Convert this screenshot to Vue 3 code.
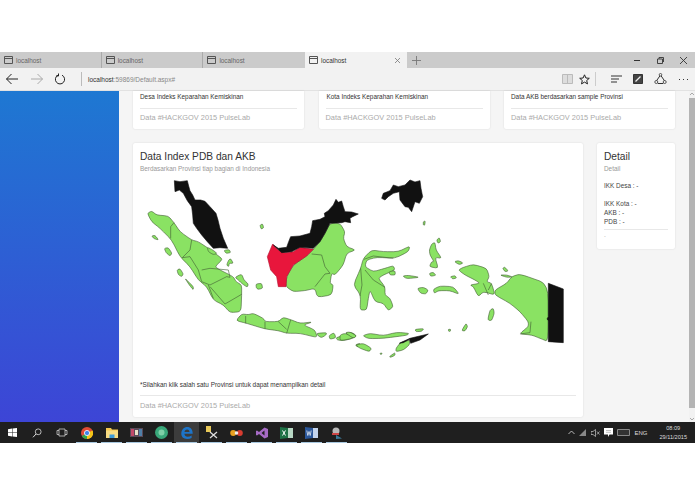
<template>
  <div class="screen">
    <div class="top-gap"></div>

    <div class="tabbar">
      <div v-for="(tab, i) in tabs" :key="i" class="tab" :class="{ active: i === 3, sep: i === 0 || i === 1 }">
        <svg class="tab-icon" width="9" height="8" viewBox="0 0 9 8"><path d="M.5.5h8v7h-8zM.5 2.5h8" fill="none" stroke="#555" /></svg>
        <span>{{ tab }}</span>
        <svg v-if="i === 3" class="tab-close" width="7" height="7" viewBox="0 0 7 7"><path d="M1 1l5 5M6 1L1 6" stroke="#777" stroke-width=".8" /></svg>
      </div>
      <svg class="plus" width="9" height="9" viewBox="0 0 9 9"><path d="M4.5 0v9M0 4.5h9" stroke="#777" stroke-width=".9" /></svg>
      <div class="win-btns">
        <svg width="9" height="9" viewBox="0 0 9 9"><path d="M1 4.5h6" stroke="#333" /></svg>
        <svg width="9" height="9" viewBox="0 0 9 9"><path d="M1.5 3h5v4.5h-5zM3 3V1.5h4.500V6" fill="none" stroke="#333" stroke-width=".9" /></svg>
        <svg width="9" height="9" viewBox="0 0 9 9"><path d="M1 1l7 7M8 1L1 8" stroke="#333" stroke-width=".9" /></svg>
      </div>
    </div>

    <div class="toolbar">
      <svg class="nav" width="14" height="12" viewBox="0 0 14 12"><path d="M13 6H1.5M6.5 1l-5 5 5 5" fill="none" stroke="#222" /></svg>
      <svg class="nav fwd" width="14" height="12" viewBox="0 0 14 12"><path d="M1 6h11.5M7.5 1l5 5-5 5" fill="none" stroke="#aaa" /></svg>
      <svg class="nav reload" width="12" height="12" viewBox="0 0 12 12"><path d="M4 2.200a4.600 4.600 0 1 0 4 0M4.500 .5v2.500H2" fill="none" stroke="#222" /></svg>
      <div class="url-sep"></div>
      <div class="url"><b>localhost</b>:59869/Default.aspx#</div>
      <div class="tools">
        <svg width="11" height="10" viewBox="0 0 11 10"><path d="M.5 .5h10v9H.5zM5.500 .5v9" fill="#ddd" stroke="#bbb" /></svg>
        <svg width="11" height="11" viewBox="0 0 11 11"><path d="M5.500 .8l1.400 3.200 3.400.3-2.600 2.200.8 3.400-3-1.800-3 1.800.8-3.400L.7 4.300l3.400-.3z" fill="none" stroke="#222" /></svg>
        <div class="tool-sep"></div>
        <svg class="t-hub" width="11" height="8" viewBox="0 0 11 8"><path d="M0 1h11M0 4h8M0 7h6" stroke="#333" /></svg>
        <svg class="t-note" width="10" height="10" viewBox="0 0 10 10"><path d="M.5 .5h9v9h-9z" fill="#444" stroke="#333" /><path d="M2.500 7.500l5-5" stroke="#eee" stroke-width="1.200" /></svg>
        <svg class="t-share" width="13" height="12" viewBox="0 0 13 12"><path d="M6.500 2L11 8.500 9 10.500H4L2 8.500z" fill="none" stroke="#333" /><circle cx="6.500" cy="1.800" r="1.300" fill="#f2f2f2" stroke="#333" stroke-width=".8" /><circle cx="2.300" cy="9" r="1.500" fill="#f2f2f2" stroke="#333" stroke-width=".8" /><circle cx="10.700" cy="9" r="1.500" fill="#f2f2f2" stroke="#333" stroke-width=".8" /></svg>
        <svg class="t-more" width="11" height="3" viewBox="0 0 11 3"><path d="M1 1.500h1M5 1.500h1M9 1.500h1" stroke="#333" /></svg>
      </div>
    </div>

    <div class="viewport">
      <aside class="sidebar"></aside>

      <main class="main">
        <div class="top-row">
          <div v-for="(c, i) in topCards" :key="i" class="card small">
            <p class="card-line" :class="{ nudged: i === 1 }">{{ c }}</p>
            <div class="foot">Data #HACKGOV 2015 PulseLab</div>
          </div>
        </div>

        <div class="bottom-row">
          <section class="card big">
            <h3>Data Index PDB dan AKB</h3>
            <p class="sub">Berdasarkan Provinsi tiap bagian di Indonesia</p>
            <svg class="map" width="436" height="204" viewBox="140 175 436 204">
              <g transform="translate(130 170) scale(.3333)" stroke-linejoin="round">
                <path v-for="(r, i) in westShapes" :key="i" :d="r.d" :fill="r.fill" :stroke="r.stroke" stroke-width="1.800" />
                <path :d="westLines" fill="none" stroke="#3f5a33" stroke-width="1.800" />
              </g>
              <g transform="translate(340 170) scale(.3333)" stroke-linejoin="round">
                <path v-for="(r, i) in eastShapes" :key="i" :d="r.d" :fill="r.fill" :stroke="r.stroke" stroke-width="1.800" />
                <path :d="eastLines" fill="none" stroke="#3f5a33" stroke-width="1.800" />
              </g>
            </svg>
            <p class="note">*Silahkan klik salah satu Provinsi untuk dapat menampilkan detail</p>
            <div class="foot">Data #HACKGOV 2015 PulseLab</div>
          </section>

          <section class="card detail">
            <h3>Detail</h3>
            <p class="sub">Detail</p>
            <p class="d-row first">IKK Desa : -</p>
            <p class="d-row gap">IKK Kota : -</p>
            <p class="d-row">AKB : -</p>
            <p class="d-row">PDB : -</p>
            <div class="d-foot">.</div>
          </section>
        </div>
      </main>

      <div class="scrollbar">
        <svg width="6" height="4" viewBox="0 0 6 4"><path d="M1 3l2-2 2 2" fill="none" stroke="#aaa" /></svg>
        <div class="thumb"></div>
        <svg width="6" height="4" viewBox="0 0 6 4"><path d="M1 1l2 2 2-2" fill="none" stroke="#aaa" /></svg>
      </div>
    </div>

    <footer class="taskbar">
      <div class="slot"><svg width="9" height="9" viewBox="0 0 9 9"><path d="M0 1.200L4 .6v3.600H0zM4.500 .5L9 0v4.200H4.500zM0 4.800h4v3.600l-4-.6zM4.500 4.800H9V9l-4.500-.6z" fill="#fff" /></svg></div>
      <div class="slot"><svg width="10" height="10" viewBox="0 0 10 10"><circle cx="6.200" cy="3.800" r="2.900" fill="none" stroke="#ddd" stroke-width=".8" /><path d="M4 6L1 9.300" stroke="#ddd" /></svg></div>
      <div class="slot"><svg width="12" height="9" viewBox="0 0 12 9"><path d="M3 1h6v7H3zM3 2.500H1v4h2M9 2.500h2v4H9" fill="none" stroke="#ccc" stroke-width=".8" /></svg></div>
      <div class="slot run"><svg width="12" height="12" viewBox="0 0 12 12"><circle cx="6" cy="6" r="6" fill="#e04a35" /><path d="M6 6L.8 9A6 6 0 0 0 6 12z" fill="#2fa44f" /><path d="M6 6v6a6 6 0 0 0 5.600-8.500z" fill="#f5c518" /><circle cx="6" cy="6" r="2.600" fill="#3f83e8" stroke="#fff" stroke-width=".8" /></svg></div>
      <div class="slot run"><svg width="12" height="11" viewBox="0 0 12 11"><path d="M0 1h5l1 1.500h6V11H0z" fill="#f3c74f" /><path d="M0 3.500h12V11H0z" fill="#f7dc83" /><path d="M3.500 7.500h5V11h-5z" fill="#3c9ad8" /></svg></div>
      <div class="slot run"><svg width="13" height="9" viewBox="0 0 13 9"><path d="M0 0h13v9H0z" fill="#5a4a58" /><path d="M1 1h3v7H1z" fill="#c24a6a" /><path d="M5 2h3v5H5z" fill="#e8e0c8" /><path d="M9 1h3v7H9z" fill="#4f7fa8" /></svg></div>
      <div class="slot run"><svg width="13" height="13" viewBox="0 0 13 13"><circle cx="6.500" cy="6.500" r="6.500" fill="#39a77a" /><circle cx="6.500" cy="6.500" r="3" fill="#7fd0a8" /></svg></div>
      <div class="slot run lit"><svg width="12" height="12" viewBox="0 0 12 12"><path d="M.3 6.300C.5 2.500 3 0 6.300 0c3.300 0 5.400 2.300 5.400 6.800H3.400c.1 2 1.500 2.900 3.200 2.900 1.500 0 2.700-.4 4-1.200v2.500c-1.300.7-2.700 1-4.300 1C2.400 12 .1 9.800.3 6.300zM3.500 5h5c0-1.500-.9-2.500-2.400-2.500S3.700 3.500 3.500 5z" fill="#1d74c8" /></svg></div>
      <div class="slot run"><svg width="13" height="13" viewBox="0 0 13 13"><path d="M1 0h5v6H1z" fill="#e8c858" /><path d="M5 6l7 6M12 6l-7 6" stroke="#ddd" stroke-width="1.300" /></svg></div>
      <div class="slot run"><svg width="13" height="8" viewBox="0 0 13 8"><circle cx="3.200" cy="4" r="3" fill="#e8a020" /><circle cx="9.800" cy="4" r="3" fill="#d83c30" /><circle cx="6.500" cy="4" r="1.800" fill="#eee" /></svg></div>
      <div class="slot run"><svg width="12" height="12" viewBox="0 0 12 12"><path d="M8.500 .5L12 2v8l-3.500 1.500L3 7l-2 1.500L0 8V4l1-.5L3 5zM8.500 3.500L5.500 6l3 2.500z" fill="#a66bc4" /></svg></div>
      <div class="slot run"><svg width="13" height="12" viewBox="0 0 13 12"><path d="M5 1h8v10H5z" fill="#b8d8c4" /><path d="M0 0l8 1v10l-8 1z" fill="#1e7145" /><path d="M2.500 3.500l3 5M5.500 3.500l-3 5" stroke="#fff" /></svg></div>
      <div class="slot run"><svg width="13" height="12" viewBox="0 0 13 12"><path d="M5 1h8v10H5z" fill="#c4d4ec" /><path d="M0 0l8 1v10l-8 1z" fill="#2b579a" /><path d="M1.800 3.500l1 5 1.200-4 1.200 4 1-5" fill="none" stroke="#fff" stroke-width=".7" /></svg></div>
      <div class="slot run"><svg width="12" height="12" viewBox="0 0 12 12"><circle cx="5" cy="4" r="3.500" fill="#b8b8b8" /><path d="M1 6h7v2H1z" fill="#c44" /><path d="M5 8l6 3.500-6 .5z" fill="#3a7a9a" /></svg></div>

      <div class="tray">
        <svg width="7" height="5" viewBox="0 0 7 5"><path d="M.5 4l3-3 3 3" fill="none" stroke="#ddd" stroke-width=".8" /></svg>
        <svg width="8" height="7" viewBox="0 0 8 7"><path d="M0 7L7 0v7z" fill="#888" /></svg>
        <svg width="9" height="8" viewBox="0 0 9 8"><path d="M0 2.500h2L4.500 .5v7L2 5.500H0zM6 2.500l2.500 3M8.500 2.500L6 5.500" fill="none" stroke="#ccc" stroke-width=".7" /></svg>
        <svg width="9" height="9" viewBox="0 0 9 9"><path d="M0 0h9v6.500H5.500L4 9V6.500H0z" fill="#fff" /><path d="M2 2.500h5M2 4.300h5" stroke="#999" stroke-width=".6" /></svg>
        <svg width="13" height="7" viewBox="0 0 13 7"><path d="M.5 .5h12v6H.5z" fill="#333" stroke="#888" /></svg>
        <span class="lang">ENG</span>
        <div class="clock"><span>08:09</span><span>29/11/2015</span></div>
      </div>
    </footer>
  </div>
</template>

<script setup>
const tabs = ['localhost', 'localhost', 'localhost', 'localhost']
const topCards = [
  'Desa Indeks Keparahan Kemiskinan',
  'Kota Indeks Keparahan Kemiskinan',
  'Data AKB berdasarkan sample Provinsi'
]

const GREEN = '#8ae263'
const BLACK = '#111'
const RED = '#e8163c'

// sudut poligon dibulatkan supaya garis pantai tidak terlalu kaku
const soften = (pts) => {
  const p = pts.trim().split(/\s+/).map(s => s.split(',').map(Number))
  const along = (a, b) => [a[0] + (b[0] - a[0]) * 0.3, a[1] + (b[1] - a[1]) * 0.3]
  let d = ''
  p.forEach((v, i) => {
    const a = along(v, p[(i + p.length - 1) % p.length])
    const b = along(v, p[(i + 1) % p.length])
    d += `${i ? 'L' : 'M'}${a[0]} ${a[1]}Q${v[0]} ${v[1]} ${b[0]} ${b[1]}`
  })
  return d + 'Z'
}
const sharp = (pts) => 'M' + pts.trim().replace(/\s+/g, 'L').replace(/,/g, ' ') + 'Z'

const shape = (pts, fill = GREEN) => ({
  d: fill === GREEN ? soften(pts) : sharp(pts),
  fill,
  stroke: fill === BLACK ? BLACK : fill === RED ? '#b01230' : '#3f5a33'
})

// titik peta: potongan kiri (zoom 3x)
const westShapes = [
  shape('133,32 150,35 172,32 176,48 180,62 188,75 195,90 212,90 225,94 240,110 258,130 264,150 270,175 280,205 293,235 270,233 250,235 232,215 215,195 200,175 190,160 188,135 185,110 172,92 160,70 148,60 135,65', BLACK),
  shape('52,130 65,123 80,135 115,138 132,158 150,185 185,210 205,215 235,235 262,255 278,268 255,290 270,300 310,320 318,335 335,345 335,375 333,425 300,428 280,405 250,390 230,350 205,330 180,290 150,260 125,210 90,175 65,155'),
  shape('65,198 75,196 86,210 72,206'),
  shape('103,235 115,233 126,250 120,258 108,248'),
  shape('141,300 150,296 160,312 155,320 145,314'),
  shape('165,325 172,332 190,350 190,360 178,345'),
  shape('315,322 335,312 342,330 355,342 352,352 335,340 325,330'),
  shape('378,342 395,340 398,355 385,358 379,354'),
  shape('390,165 398,162 401,174 393,177'),
  shape('282,241 298,239 302,248 288,250'),
  shape('290,285 296,270 302,266 310,280 298,280 296,290'),
  shape('232,232 245,238 262,250 250,254 235,245'),
  // jawa dan bali
  shape('318,452 335,432 355,434 370,430 400,445 406,455 445,455 460,442 485,450 510,460 548,456 520,465 555,480 562,503 510,490 470,490 445,482 405,477 350,460'),
  shape('560,490 590,488 588,495 575,503 565,498'),
  shape('597,497 612,488 618,503 600,508'),
  shape('618,503 648,495 680,498 665,506 640,512 622,510'),
  shape('645,490 665,487 680,497 660,497'),
  shape('677,524 690,520 690,530 680,530'),
  // kalimantan
  shape('600,160 630,160 645,185 640,205 650,230 677,240 650,250 640,285 615,315 605,310 600,340 610,345 605,375 562,382 555,355 525,362 490,365 468,350 470,320 490,285 530,258 550,238 570,215 585,190'),
  shape('428,222 445,240 465,248 490,245 510,232 550,238 530,258 490,285 470,320 468,350 445,350 440,320 422,300 412,260', RED),
  shape('430,225 445,235 470,232 476,215 482,200 510,198 540,190 545,170 548,152 570,148 585,140 583,130 595,122 610,105 618,88 625,97 635,93 640,110 645,125 665,126 685,132 668,140 660,145 662,158 645,155 635,158 600,160 585,190 570,215 550,235 510,232 485,245 455,248', BLACK)
]
const westLines = 'M122 205L122 170 132 158M185 210L180 240 157 263 180 260 205 300 215 335 240 345 290 320 300 322M215 300L240 295 295 300 300 322M240 350L285 402 335 373M235 345L250 385M545 252L575 255 585 290 600 310 585 312 555 350M347 438L347 460M405 455L405 477M482 450L470 490M445 455L470 478'

// potongan kanan (zoom 3x)
const eastShapes = [
  shape('125,85 130,70 150,62 160,45 175,50 195,45 210,30 225,36 240,32 243,55 248,80 238,100 225,95 215,125 205,112 195,110 180,90 178,65 160,70 145,80 135,90', BLACK),
  shape('40,345 62,295 70,265 95,240 130,245 175,245 210,228 205,245 165,265 110,262 80,270 75,290 100,305 135,295 160,287 165,300 130,315 115,325 135,350 135,375 150,385 160,410 145,422 130,400 105,395 90,360 85,385 80,420 60,420 62,375'),
  shape('147,305 165,302 166,315 150,315'),
  shape('268,240 275,222 285,217 288,240 305,265 285,262 295,295 268,290 275,275 282,275 270,255'),
  shape('290,210 298,203 302,215 294,220'),
  shape('343,275 355,272 370,279 358,284'),
  shape('250,155 256,153 254,166 250,165'),
  shape('188,318 205,316 240,322 200,326'),
  shape('268,310 280,307 288,316 272,319'),
  shape('331,320 345,317 350,324 338,327'),
  shape('232,355 250,352 265,360 258,372 242,370'),
  shape('280,358 300,348 340,350 358,373 330,362 295,362 283,370'),
  shape('355,300 370,292 400,283 440,295 448,320 440,335 455,340 465,375 430,365 415,380 400,350 390,345 420,340 405,330 375,315'),
  shape('465,360 500,340 515,320 540,312 625,342 625,515 600,505 575,495 538,492 565,470 565,455 540,425 510,400 465,375'),
  shape('625,340 670,357 670,518 625,515 625,452 621,447 625,440', BLACK),
  shape('480,315 500,315 518,321 500,322'),
  shape('488,295 494,291 505,303 495,305'),
  shape('443,450 450,420 460,415 463,430 455,452'),
  shape('365,482 378,460 383,470 375,483'),
  shape('325,478 332,478 331,484 326,484'),
  shape('0,495 15,490 45,500 30,507 0,512'),
  shape('15,488 30,486 50,498 40,505'),
  shape('68,497 90,490 130,497 170,487 208,490 200,496 130,505 85,506'),
  shape('225,478 252,476 245,484 228,485'),
  shape('47,525 70,520 95,535 88,545 60,535'),
  shape('168,535 182,517 210,510 208,525 190,540 168,545'),
  shape('178,520 210,505 265,492 240,510 212,520 208,508 190,518', BLACK),
  shape('148,560 165,548 165,556 152,562'),
  shape('120,550 126,549 125,553 121,553')
]
const eastLines = 'M62 295L66 345 60 378M75 300L100 330 135 352M72 268L100 258 160 265M540 492L570 488 573 455M430 340L445 375M455 340L445 360'
</script>

<style scoped>
.screen {
  width: 695px;
  height: 494px;
  display: flex;
  flex-direction: column;
  background: #fff;
  font-family: "Liberation Sans", Arial, sans-serif;
  overflow: hidden;
}
.top-gap { height: 52px; }

.tabbar {
  height: 16px;
  background: #cbcbcb;
  display: flex;
  align-items: center;
}
.tab {
  width: 101.7px;
  height: 100%;
  display: flex;
  align-items: center;
  gap: 3px;
  padding-left: 4px;
  box-sizing: border-box;
  font-size: 6.4px;
  color: #666;
  position: relative;
}
.tab.sep { border-right: 1px solid #aaa; }
.tab.active { background: #f2f2f2; color: #333; }
.tab-close { position: absolute; right: 6px; top: 5px; }
.plus { margin-left: 5px; }
.win-btns {
  margin-left: auto;
  display: flex;
  gap: 14px;
  padding-right: 7px;
}

.toolbar {
  height: 23px;
  background: #f2f2f2;
  display: flex;
  align-items: center;
  padding-left: 5px;
  border-bottom: 1px solid #e2e2e2;
  box-sizing: border-box;
}
.nav { margin-right: 11px; }
.fwd { margin-right: 10px; }
.reload { margin-right: 15px; }
.url-sep { width: 1px; height: 14px; background: #bbb; margin-right: 6px; }
.url { font-size: 6.5px; color: #888; }
.url b { color: #333; font-weight: 400; }
.tools {
  margin-left: auto;
  display: flex;
  align-items: center;
  gap: 5.5px;
  padding-right: 6.5px;
}
.tool-sep { width: 1px; height: 14px; background: #ccc; }
.t-hub { margin-left: 9px; }
.t-note { margin-left: 6px; }
.t-share { margin-left: 5px; }
.t-more { margin-left: 5.5px; }

.viewport {
  height: 331px;
  display: flex;
  background: #f5f5f5;
}
.sidebar {
  width: 119px;
  background: linear-gradient(#1e78d2, #3d45d6);
}
.main {
  flex: 1;
  padding: 0 14px;
  min-width: 0;
}
.top-row {
  display: grid;
  grid-template-columns: repeat(3, 171px);
  column-gap: 14.5px;
}
.bottom-row {
  display: flex;
  align-items: flex-start;
  gap: 14px;
  margin-top: 14px;
}
.card {
  background: #fff;
  border-radius: 2px;
  box-shadow: 0 0 2px rgba(0, 0, 0, .12);
  box-sizing: border-box;
}
.small {
  height: 38px;
  padding: 0 7px;
  border-radius: 0 0 2px 2px;
}
.card-line {
  margin: 0;
  height: 17px;
  line-height: 11px;
  font-size: 6.4px;
  color: #333;
  border-bottom: 1px solid #e8e8e8;
}
.card-line.nudged { text-indent: 1px; }
.foot {
  font-size: 7.4px;
  color: #aaa;
  line-height: 18px;
}
.big {
  width: 450px;
  height: 274px;
  padding: 7px 7px 0;
}
h3 {
  margin: 0;
  font-weight: 400;
  font-size: 10.2px;
  line-height: 14px;
  color: #333;
}
.sub {
  margin: 0;
  font-size: 6.4px;
  line-height: 10px;
  color: #999;
}
.map { display: block; margin-top: 1px; }
.note {
  margin: 0;
  font-size: 6.4px;
  line-height: 11px;
  color: #333;
  height: 16px;
  border-bottom: 1px solid #e8e8e8;
}
.big .foot { line-height: 19px; }
.detail {
  width: 78px;
  height: 106px;
  padding: 7px 7px 0;
}
.d-row {
  margin: 0;
  font-size: 6.4px;
  line-height: 9px;
  color: #444;
}
.d-row.first { margin-top: 7px; }
.d-row.gap { margin-top: 9px; }
.d-foot {
  margin-top: 3px;
  border-top: 1px solid #e8e8e8;
  font-size: 6.6px;
  color: #aaa;
  line-height: 9px;
}

.scrollbar {
  width: 6px;
  background: #f2f2f2;
  display: flex;
  flex-direction: column;
  align-items: center;
  padding-top: 1px;
  box-sizing: border-box;
}
.thumb {
  width: 6px;
  height: 310px;
  background: #b4b4b4;
  margin: 2px 0 9px;
}

.taskbar {
  height: 21px;
  background: #1f1f1f;
  display: flex;
  align-items: stretch;
  color: #ddd;
}
.slot {
  width: 25px;
  display: flex;
  align-items: center;
  justify-content: center;
  position: relative;
}
.slot:first-child { width: 24px; }
.slot.run::after {
  content: "";
  position: absolute;
  left: 2px;
  right: 2px;
  bottom: 0;
  height: 1px;
  background: #a8c8e0;
}
.slot.lit { background: #3c3c3c; }
.tray {
  margin-left: auto;
  display: flex;
  align-items: center;
  gap: 4px;
  padding-right: 8px;
}
.lang { font-size: 6px; margin: 0 8px 0 0; }
.clock {
  display: flex;
  flex-direction: column;
  align-items: center;
  font-size: 5.6px;
  line-height: 9px;
}
</style>
